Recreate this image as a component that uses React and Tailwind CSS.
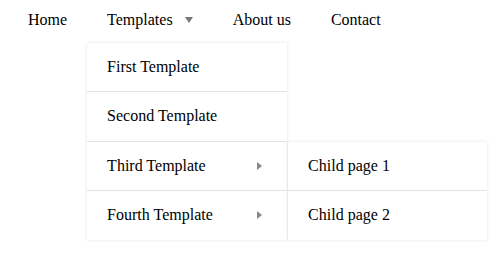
export default function App() {
  const items = [
    { label: "First Template" },
    { label: "Second Template" },
    { label: "Third Template", sub: true, open: true },
    { label: "Fourth Template", sub: true },
  ];
  return (
    <div className="w-[501px] h-[256px] bg-white text-black text-[16px] leading-[19px] pl-2 font-['Liberation_Serif',serif]">
      <ul className="flex">
        <li className="px-5 pt-[10px] pb-[14px]">Home</li>
        <li className="relative px-5 pt-[10px] pb-[14px] flex items-center">
          <span>Templates</span>
          <span className="ml-[12px] mt-[1px] w-0 h-0 border-l-[4px] border-r-[4px] border-t-[6px] border-l-transparent border-r-transparent border-t-[#777]"></span>
          <ul className="absolute left-0 top-full w-[200px] bg-white shadow-[0_0_3px_rgba(0,0,0,0.12)] leading-[18.4px]">
            {items.map((it, i) => (
              <li
                key={i}
                className={`relative flex items-center justify-between pl-5 pr-[25px] py-[15px] ${i < items.length - 1 ? "border-b border-[#e3e3e3]" : ""}`}
              >
                <span>{it.label}</span>
                {it.sub && (
                  <span className="w-0 h-0 border-t-[4px] border-b-[4px] border-l-[5px] border-t-transparent border-b-transparent border-l-[#888]"></span>
                )}
                {it.open && (
                  <ul className="absolute left-full top-0 ml-px w-[199px] bg-white shadow-[0_0_3px_rgba(0,0,0,0.12)]">
                    <li className="pl-5 py-[15px] border-b border-[#e3e3e3]">Child page 1</li>
                    <li className="pl-5 py-[15px]">Child page 2</li>
                  </ul>
                )}
              </li>
            ))}
          </ul>
        </li>
        <li className="px-5 pt-[10px] pb-[14px]">About us</li>
        <li className="px-5 pt-[10px] pb-[14px]">Contact</li>
      </ul>
    </div>
  );
}
